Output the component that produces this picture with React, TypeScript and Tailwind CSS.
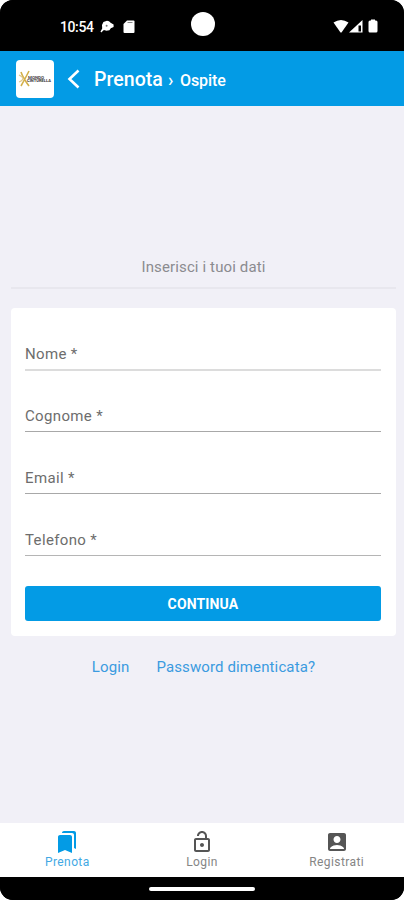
import React from "react";
import { MdBookmarks, MdOutlineLockOpen, MdAccountBox } from "react-icons/md";

function StatusBar() {
  return (
    <header className="relative flex h-[51px] shrink-0 items-center justify-between bg-black pr-[25px] pl-[60px] text-white">
      <div className="flex items-center pt-[2px]">
        <span className="w-[40px] text-[14px] leading-[16px] font-medium tracking-[-0.4px]">10:54</span>
        <svg className="h-[13px] w-[14px]" viewBox="0 0 14 13" fill="currentColor">
          <path d="M7 0.8 9 1.2 10.6 2.8 13.6 4.5V7L10.8 8.2 9.4 10.2 6.5 10.8 3.9 10 1.2 12.5 0.5 11.5 2.2 8.5 2 5 3.4 2.1Z" />
          <circle cx="6.6" cy="5.8" r="1" fill="#777" />
        </svg>
        <svg className="ml-[9px] h-[13px] w-[12px]" viewBox="0 0 12 13" fill="currentColor">
          <path d="M4 0.5h6.5q1 0 1 1V12q0 1-1 1h-9q-1 0-1-1V4Z" />
          <path d="M4.5 2.5h5" stroke="#888" strokeWidth="1" />
        </svg>
      </div>
      <div className="absolute top-[12px] left-[191px] size-[24px] rounded-full bg-white" />
      <svg className="mt-[1px] h-[15px] w-[46px]" viewBox="0 0 46 15" fill="currentColor">
        <path d="M0.5 3.5Q8 -1.5 15.5 3.5L8.5 13.5H7.5Z" />
        <path fillRule="evenodd" d="M16 13.5 29.5 1V13.5ZM25.5 6.5V12.5H28V6.5Z" />
        <path d="M37 1.5h1V.5h4v1h1q1.5 0 1.5 1.5V12q0 1.5-1.5 1.5h-6q-1.5 0-1.5-1.5V3q0-1.5 1.5-1.5Z" />
      </svg>
    </header>
  );
}

function Logo() {
  return (
    <div className="flex size-[38px] items-center justify-center rounded-[4px] bg-white">
      <svg className="h-[20px] w-[36px]" viewBox="0 0 36 20">
        <path d="M4 3Q6 9 12 17M12 2Q9 8 4 17" fill="none" stroke="#d3b04a" strokeWidth="1.6" />
        <path d="M2 6Q6 8 6 10Q5 12 2 13" fill="none" stroke="#e0c88a" strokeWidth="1.2" />
        <text x="11" y="9.8" fontSize="4" fontWeight="700" textLength="16" lengthAdjust="spacingAndGlyphs" fill="#444">MONDO</text>
        <text x="10" y="13" fontSize="4" fontWeight="700" textLength="24" lengthAdjust="spacingAndGlyphs" fill="#333">CINTURELLA</text>
      </svg>
    </div>
  );
}

function TopBar() {
  return (
    <div className="flex h-[55px] shrink-0 items-center bg-[#039be5] pl-[16px] text-white">
      <Logo />
      <svg className="ml-[13px] h-[20px] w-[13px]" viewBox="0 0 13 20" fill="none" stroke="currentColor" strokeWidth="2.6">
        <path d="M11.5 1.5 2.5 10l9 8.5" />
      </svg>
      <h1 className="ml-[14px] flex items-baseline pt-[2px] font-medium">
        <span className="w-[74px] text-[19.5px] tracking-[0.05px]">Prenota</span>
        <span className="w-[12px] text-[18px]">›</span>
        <span className="text-[16px] tracking-[-0.1px]">Ospite</span>
      </h1>
    </div>
  );
}

function Field({ label, line }: { label: string; line: string }) {
  return (
    <label className="flex h-[62px] flex-col justify-end text-[15px] leading-[18px] tracking-[0.35px] text-[#6d6d6d]">
      <span className="mb-[6px]">{label} *</span>
      <span className={line} />
    </label>
  );
}

function Tab({ icon, label, active }: { icon: React.ReactNode; label: string; active?: boolean }) {
  return (
    <div className={`flex w-[135px] flex-col items-center pt-[7px] ${active ? "text-[#039be5]" : "text-[#555]"}`}>
      {icon}
      <span className={`mt-px text-[12px] leading-[15px] tracking-[0.4px] ${active ? "text-[#42a9e4]" : "text-[#858585]"}`}>{label}</span>
    </div>
  );
}

export default function App() {
  return (
    <div className="h-[900px] w-[404px] bg-white font-['Roboto',sans-serif]">
      <div className="flex h-full flex-col overflow-hidden rounded-[13px] bg-black">
        <StatusBar />
        <TopBar />
        <main className="flex flex-1 flex-col bg-[#f1f0f7] pr-[8px] pl-[11px]">
          <h2 className="mt-[150px] h-[33px] border-b-2 border-[#e8e7ee] pt-[1px] text-center text-[15px] leading-[20px] tracking-[0.13px] text-[#8b8b90]">
            Inserisci i tuoi dati
          </h2>
          <section className="mt-[19px] h-[328px] rounded-[4px] bg-white pr-[15px] pl-[14px]">
            <Field label="Nome" line="-mb-px h-[2px] shrink-0 bg-[#dcdcdc]" />
            <Field label="Cognome" line="h-px shrink-0 bg-[#a8a8a8]" />
            <Field label="Email" line="h-px shrink-0 bg-[#a8a8a8]" />
            <Field label="Telefono" line="h-px shrink-0 bg-[#b5b5b5]" />
            <button className="mt-[30px] h-[35px] w-full rounded-[3px] bg-[#039be5] pt-[1px] text-[14px] font-bold tracking-[0.15px] text-white">CONTINUA</button>
          </section>
          <div className="mt-[21px] flex justify-center gap-[27px] text-[15px] leading-[20px] tracking-[0.12px] text-[#3b9be0]">
            <a>Login</a>
            <a>Password dimenticata?</a>
          </div>
        </main>
        <nav className="flex h-[54px] shrink-0 bg-white">
          <Tab active label="Prenota" icon={<MdBookmarks className="size-[24px]" />} />
          <Tab label="Login" icon={<MdOutlineLockOpen className="size-[24px]" />} />
          <Tab label="Registrati" icon={<MdAccountBox className="size-[24px]" />} />
        </nav>
        <footer className="flex h-[23px] shrink-0 justify-center bg-black pt-[10px]">
          <div className="h-[4px] w-[106px] rounded-full bg-white" />
        </footer>
      </div>
    </div>
  );
}
